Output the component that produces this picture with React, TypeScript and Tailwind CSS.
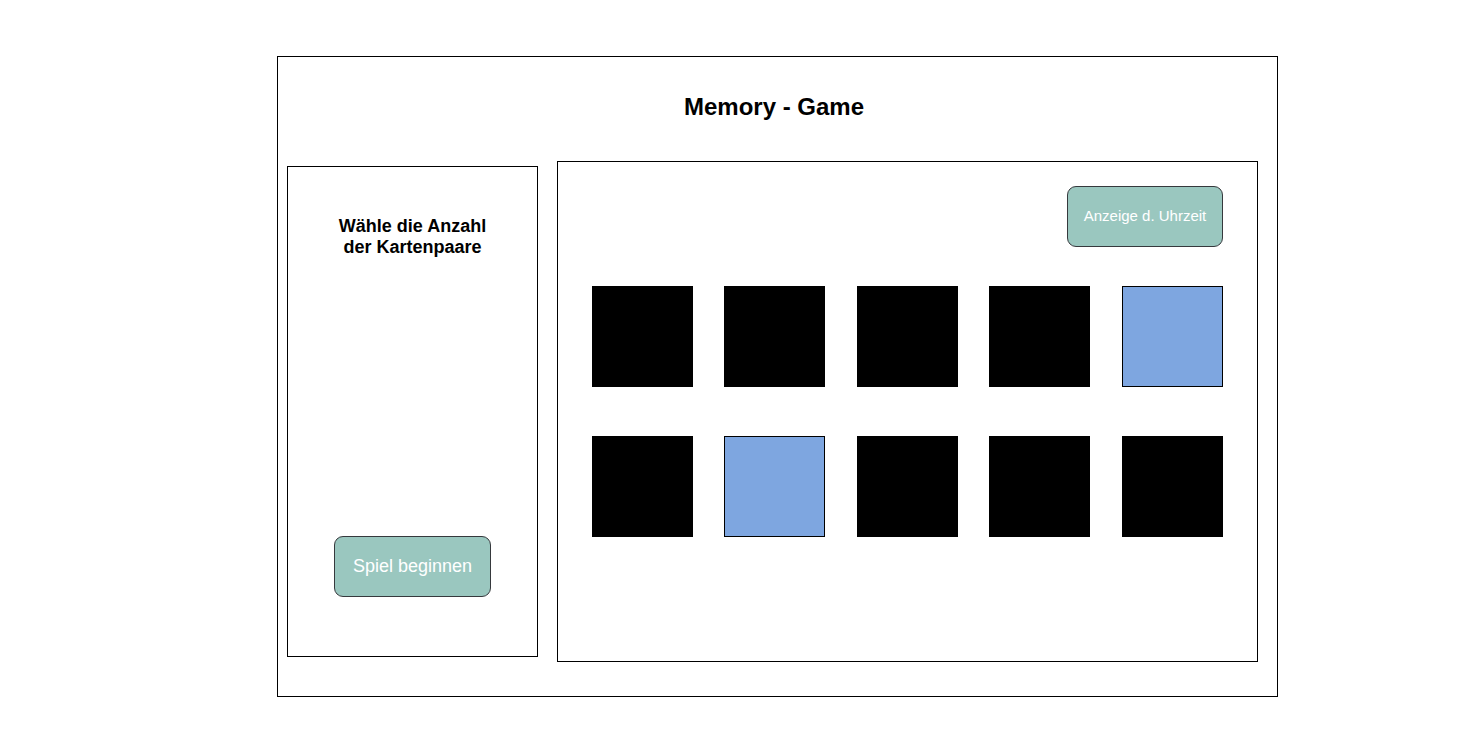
const cards: ("black" | "blue")[] = [
  "black", "black", "black", "black", "blue",
  "black", "blue", "black", "black", "black",
];

// gaps between cards so they land on the same pixels as the mockup
const gaps = ["", "ml-[31px]", "ml-[32px]", "ml-[31px]", "ml-[32px]"];

function Card({ color, className }: { color: "black" | "blue"; className?: string }) {
  return (
    <div
      className={`w-[101px] h-[101px] border border-black ${color === "blue" ? "bg-[#7ea6e0]" : "bg-black"} ${className ?? ""}`}
    />
  );
}

export default function App() {
  return (
    <div className="w-[1480px] h-[737px] bg-white pl-[277px] pt-[56px] font-['Liberation_Sans',Arial,sans-serif] text-black">
      <div className="w-[1001px] h-[641px] border border-black">
        {/* Title */}
        <h1 className="pt-[36px] pr-[7px] text-center text-[24px] leading-[28px] font-bold">Memory - Game</h1>

        <div className="mt-[40px] flex items-start">
          {/* Left panel */}
          <div className="ml-[9px] mt-[5px] w-[251px] h-[491px] border border-black flex flex-col items-center">
            <p className="mt-[49px] text-center text-[18px] leading-[21px] font-bold">
              Wähle die Anzahl
              <br />
              der Kartenpaare
            </p>
            <button className="mt-auto mb-[59px] w-[157px] h-[61px] rounded-[9px] border border-[#36393d] bg-[#9ac7bf] text-white text-[18px]">
              Spiel beginnen
            </button>
          </div>

          {/* Right panel */}
          <div className="ml-[19px] w-[701px] h-[501px] border border-black px-[34px] pt-[24px]">
            <div className="flex justify-end">
              <button className="w-[156px] h-[61px] rounded-[9px] border border-[#36393d] bg-[#9ac7bf] text-white text-[15px]">
                Anzeige d. Uhrzeit
              </button>
            </div>
            <div className="mt-[39px] flex flex-col gap-[49px]">
              {[0, 1].map((row) => (
                <div key={row} className="flex">
                  {cards.slice(row * 5, row * 5 + 5).map((c, i) => (
                    <Card key={i} color={c} className={gaps[i]} />
                  ))}
                </div>
              ))}
            </div>
          </div>
        </div>
      </div>
    </div>
  );
}
